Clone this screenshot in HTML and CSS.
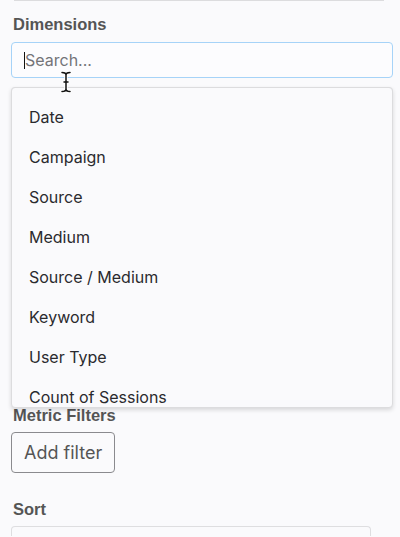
FILE: index.html
```html
<!DOCTYPE html>
<html>
<head>
<meta charset="utf-8">
<link rel="stylesheet" href="styles.css">
</head>
<body>
<div class="panel">
  <div class="divider"></div>
  <div class="label label-dim">Dimensions</div>
  <div class="field">
    <div class="search">
      <span class="caret"></span>
      <span class="placeholder">Search...</span>
    </div>
    <svg class="ibeam" width="12" height="22" viewBox="0 0 12 22">
      <path d="M2 1.5 Q6 1.5 6 4 Q6 1.5 10 1.5 M6 4 V18 M2 20.5 Q6 20.5 6 18 Q6 20.5 10 20.5 M4 11 H8" fill="none" stroke="#fff" stroke-width="3.4" stroke-linecap="round"/>
      <path d="M2 1.5 Q6 1.5 6 4 Q6 1.5 10 1.5 M6 4 V18 M2 20.5 Q6 20.5 6 18 Q6 20.5 10 20.5 M4 11 H8" fill="none" stroke="#111" stroke-width="1.5" stroke-linecap="round"/>
    </svg>
    <div class="select-under"></div>
    <div class="menu">
      <div class="item">Date</div>
      <div class="item">Campaign</div>
      <div class="item">Source</div>
      <div class="item">Medium</div>
      <div class="item">Source / Medium</div>
      <div class="item">Keyword</div>
      <div class="item">User Type</div>
      <div class="item">Count of Sessions</div>
    </div>
  </div>
  <div class="label label-metric">Metric Filters</div>
  <button class="btn">Add filter</button>
  <div class="label label-sort">Sort</div>
  <div class="sort-box"></div>
</div>
</body>
</html>
```
FILE: styles.css
```css
html, body {
  margin: 0;
  padding: 0;
  background: #fafafc;
  overflow: hidden;
}
body {
  width: 400px;
  height: 537px;
  font-family: Inter, "Liberation Sans", Arial, sans-serif;
}
.panel {
  padding: 0 7px 0 11px;
}
.divider {
  height: 1px;
  background: #dcdcde;
  margin: 0 9px 0 3px;
}
.label {
  font-family: "Liberation Sans", Arial, sans-serif;
  font-weight: bold;
  font-size: 16.5px;
  color: #555;
  line-height: 18px;
  padding-left: 2px;
}
.label-dim {
  margin-top: 14px;
}
.field {
  position: relative;
  margin-top: 9px;
}
.search {
  height: 34px;
  border: 1px solid #a6d3f8;
  border-radius: 4px;
  background: #fcfcfe;
  display: flex;
  align-items: center;
  padding-left: 12px;
  position: relative;
}
.caret {
  width: 1px;
  height: 17px;
  background: #111;
}
.placeholder {
  font-size: 16px;
  color: #747478;
}
.ibeam {
  position: absolute;
  left: 49px;
  top: 29px;
  z-index: 3;
}
.select-under {
  margin-top: 9px;
  height: 314px;
  border: 1px solid #dedee0;
  border-radius: 4px;
}
.menu {
  position: absolute;
  left: 0;
  right: 0;
  top: 45px;
  height: 321px;
  box-sizing: border-box;
  padding-top: 9px;
  border: 1px solid #dcdcde;
  border-radius: 4px;
  background: #fafafc;
  box-shadow: 0 2px 4px rgba(0,0,0,0.14);
  overflow: hidden;
  z-index: 2;
}
.item {
  height: 40px;
  line-height: 40px;
  padding-left: 17px;
  font-size: 16px;
  color: #2a2a2e;
}
.label-metric {
  margin-top: 3px;
}
.btn {
  display: block;
  margin-top: 8px;
  height: 41px;
  width: 104px;
  box-sizing: border-box;
  border: 1px solid #8a8a8e;
  border-radius: 4px;
  background: #fafafc;
  font-family: inherit;
  font-size: 18px;
  color: #555;
  padding: 0 0 0 12px;
  text-align: left;
}
.label-sort {
  margin-top: 27px;
}
.sort-box {
  margin-top: 8px;
  width: 358px;
  height: 9px;
  border: 1px solid #dedee0;
  border-bottom: none;
  border-radius: 4px 4px 0 0;
}
```
